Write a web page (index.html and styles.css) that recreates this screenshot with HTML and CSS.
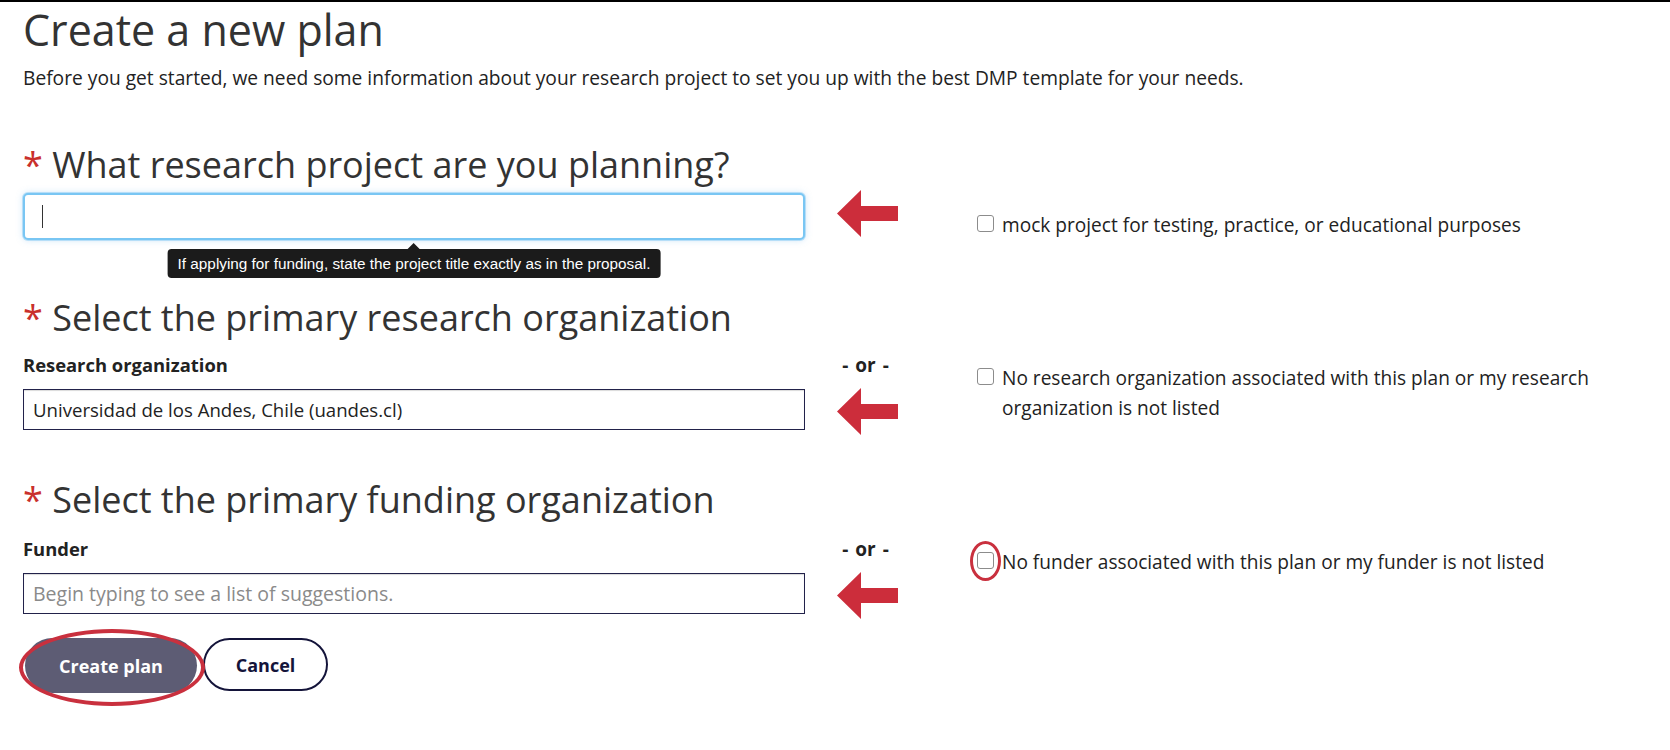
FILE: index.html
```html
<!DOCTYPE html>
<html lang="en">
<head>
    <meta charset="UTF-8">
    <title>Create a new plan</title>
    <link rel="stylesheet" href="styles.css">
</head>
<body>
    <div class="topbar"></div>
    <main class="page">
        <h1 class="page-title">Create a new plan</h1>
        <p class="intro">Before you get started, we need some information about your research project to set you up with the best DMP template for your needs.</p>

        <section class="field-group group-project">
            <h2 class="field-heading"><span class="req">*</span> What research project are you planning?</h2>
            <div class="field-row row-single">
                <div class="input-wrap area-input">
                    <input class="form-input is-focused" type="text" aria-label="Project title">
                    <span class="caret"></span>
                    <div class="tooltip">If applying for funding, state the project title exactly as in the proposal.</div>
                </div>
                <div class="mid area-arrow">
                    <svg class="arrow arrow-first" viewBox="0 0 61 47"><polygon points="0,23.5 24,0 24,16 61,16 61,31 24,31 24,47"/></svg>
                </div>
                <label class="check area-check check-single">
                    <span class="check-box"></span>
                    <span class="check-text">mock project for testing, practice, or educational purposes</span>
                </label>
            </div>
        </section>

        <section class="field-group group-org">
            <h2 class="field-heading"><span class="req">*</span> Select the primary research organization</h2>
            <div class="field-row">
                <div class="field-label area-label">Research organization</div>
                <div class="mid area-or"><span class="or">- or -</span></div>
                <label class="check area-check">
                    <span class="check-box"></span>
                    <span class="check-text">No research organization associated with this plan or my research organization is not listed</span>
                </label>
                <div class="area-input">
                    <input class="form-input" type="text" value="Universidad de los Andes, Chile (uandes.cl)" aria-label="Research organization">
                </div>
                <div class="mid area-arrow">
                    <svg class="arrow" viewBox="0 0 61 47"><polygon points="0,23.5 24,0 24,16 61,16 61,31 24,31 24,47"/></svg>
                </div>
            </div>
        </section>

        <section class="field-group group-funder">
            <h2 class="field-heading"><span class="req">*</span> Select the primary funding organization</h2>
            <div class="field-row">
                <div class="field-label area-label">Funder</div>
                <div class="mid area-or"><span class="or">- or -</span></div>
                <label class="check area-check">
                    <span class="check-box">
                        <span class="mark mark-check"></span>
                    </span>
                    <span class="check-text">No funder associated with this plan or my funder is not listed</span>
                </label>
                <div class="area-input">
                    <input class="form-input" type="text" placeholder="Begin typing to see a list of suggestions." aria-label="Funder">
                </div>
                <div class="mid area-arrow">
                    <svg class="arrow" viewBox="0 0 61 47"><polygon points="0,23.5 24,0 24,16 61,16 61,31 24,31 24,47"/></svg>
                </div>
            </div>
        </section>

        <div class="actions">
            <span class="btn-wrap">
                <button class="btn btn-primary">Create plan</button>
                <span class="mark mark-btn"></span>
            </span>
            <button class="btn btn-secondary">Cancel</button>
        </div>
    </main>
</body>
</html>
```

FILE: styles.css
```css
body {
    margin: 0;
    font-family: "Open Sans", "Noto Sans", sans-serif;
    color: #222;
    background: #fff;
}
.topbar {
    height: 2px;
    background: #000;
}
.page {
    padding: 0 23px 40px;
}
.page-title {
    margin: 0;
    font-size: 43px;
    font-weight: 400;
    line-height: 55px;
    color: #333;
}
.intro {
    margin: 8px 0 0;
    font-size: 19.2px;
    line-height: 26px;
}
.field-heading {
    margin: 0 0 14px;
    font-size: 36px;
    font-weight: 400;
    line-height: 42px;
    color: #333;
}
.req {
    color: #c9302c;
}
.group-project {
    margin-top: 53px;
}
.group-project .field-heading {
    margin-bottom: 7px;
}
.group-org {
    margin-top: 57px;
}
.group-funder {
    margin-top: 49px;
}
.group-funder .field-heading {
    margin-bottom: 16px;
}
.field-row {
    display: grid;
    grid-template-columns: 782px 172px 620px;
    grid-template-areas:
        "label or check"
        "input arrow check";
    row-gap: 12px;
}
.row-single {
    grid-template-areas: "input arrow check";
}
.area-label { grid-area: label; }
.area-or { grid-area: or; }
.area-input { grid-area: input; }
.area-arrow { grid-area: arrow; }
.area-check { grid-area: check; }
.field-label {
    font-size: 18.4px;
    font-weight: 700;
    line-height: 24px;
}
.mid {
    padding-left: 30px;
}
.or {
    display: block;
    width: 61px;
    text-align: center;
    font-size: 19px;
    font-weight: 700;
    line-height: 24px;
    word-spacing: 2px;
}
.arrow {
    display: block;
    width: 61px;
    height: 47px;
    margin: -1px 0 -20px 2px;
    fill: #cc2d3b;
}
.arrow-first {
    margin-top: -3px;
}
.input-wrap {
    position: relative;
}
.form-input {
    display: block;
    box-sizing: border-box;
    width: 100%;
    height: 41px;
    margin: 0;
    padding: 0 9px;
    border: 1px solid #22224a;
    border-radius: 0;
    box-shadow: inset 0 1px 1px rgba(0,0,0,0.15);
    font-family: inherit;
    font-size: 18.6px;
    color: #222;
    background: #fff;
    outline: none;
}
.form-input::placeholder {
    font-size: 19.5px;
    color: #8a8a8a;
}
.form-input.is-focused {
    height: 47px;
    border: 2px solid #79c6f3;
    border-radius: 5px;
    box-shadow: 0 0 0 1px rgba(121,198,243,0.45), 0 0 7px rgba(102,175,233,0.35);
}
.caret {
    position: absolute;
    left: 19px;
    top: 12px;
    width: 1px;
    height: 23px;
    background: #333;
}
.tooltip {
    position: absolute;
    top: 56px;
    left: 50%;
    transform: translateX(-50%);
    padding: 0 10px;
    border-radius: 4px;
    background: #1b1b1b;
    color: #fff;
    font-family: "Liberation Sans", Arial, sans-serif;
    font-size: 15.3px;
    line-height: 29px;
    white-space: nowrap;
}
.tooltip:before {
    content: "";
    position: absolute;
    top: -6px;
    left: 50%;
    margin-left: -6px;
    border-left: 6px solid transparent;
    border-right: 6px solid transparent;
    border-bottom: 6px solid #1b1b1b;
}
.check {
    display: flex;
    align-items: flex-start;
    gap: 8px;
    padding-top: 10px;
    font-size: 19.1px;
    line-height: 30px;
    color: #222;
}
.check-single {
    padding-top: 17px;
}
.check-box {
    position: relative;
    flex: none;
    box-sizing: border-box;
    width: 17px;
    height: 17px;
    margin-top: 5px;
    border: 1px solid #8c8c8c;
    border-radius: 3px;
    background: #fff;
}
.check-text {
    max-width: 600px;
}
.mark {
    position: absolute;
    box-sizing: border-box;
    border-style: solid;
    border-color: #c9303e;
    border-radius: 50%;
}
.mark-check {
    left: -8px;
    top: -12px;
    width: 31px;
    height: 40px;
    border-width: 3px;
}
.actions {
    display: flex;
    align-items: flex-start;
    gap: 6px;
    margin-top: 24px;
    padding-left: 2px;
}
.btn-wrap {
    position: relative;
    display: block;
}
.btn {
    display: block;
    box-sizing: border-box;
    height: 55px;
    padding: 0;
    border-radius: 28px;
    font-family: inherit;
    font-size: 18px;
    font-weight: 700;
    cursor: pointer;
}
.btn-primary {
    width: 172px;
    border: none;
    background: #5d5c74;
    color: #fff;
}
.btn-secondary {
    width: 125px;
    height: 53px;
    border: 2px solid #14143a;
    background: #fff;
    color: #14143a;
}
.mark-btn {
    left: -6px;
    top: -9px;
    width: 186px;
    height: 77px;
    border-width: 4px;
}
```
